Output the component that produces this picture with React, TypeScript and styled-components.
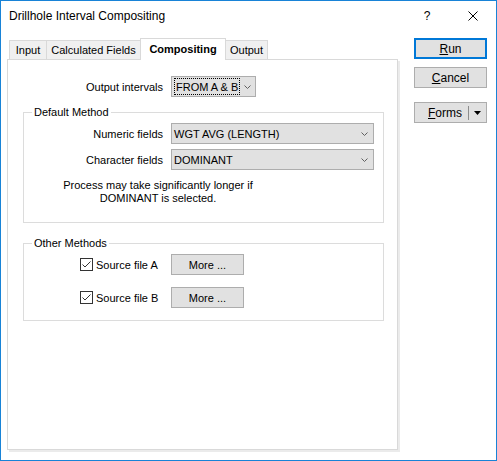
import styled, { createGlobalStyle } from 'styled-components'

const GlobalStyle = createGlobalStyle`
  html, body {
    margin: 0;
    padding: 0;
    background: #fff;
  }
  * {
    box-sizing: border-box;
  }
`

export default function App() {
  return (
    <>
      <GlobalStyle />
      <Window>
        <TitleBar>
          <Title>Drillhole Interval Compositing</Title>
          <CaptionButton>?</CaptionButton>
          <CaptionButton>
            <svg width="10" height="10" viewBox="0 0 10 10">
              <path d="M0.5 0.5 L9.5 9.5 M9.5 0.5 L0.5 9.5" stroke="#000" strokeWidth="1" fill="none" />
            </svg>
          </CaptionButton>
        </TitleBar>

        <Body>
          <TabControl>
            <TabRow>
              <Tab $w={38}>Input</Tab>
              <Tab $w={95}>Calculated Fields</Tab>
              <Tab $w={86} $active>Compositing</Tab>
              <Tab $w={43}>Output</Tab>
            </TabRow>
            <Panel>
              <FormRow>
                <FieldLabel>Output intervals</FieldLabel>
                <Combo $w={85}>
                  <FocusText>FROM A &amp; B</FocusText>
                  <Chevron />
                </Combo>
              </FormRow>

              <GroupBox $mt={9}>
                <Legend>Default Method</Legend>
                <FormRow>
                  <FieldLabel>Numeric fields</FieldLabel>
                  <Combo $w={203}>
                    <ComboText>WGT AVG (LENGTH)</ComboText>
                    <Chevron />
                  </Combo>
                </FormRow>
                <FormRow $mt={5}>
                  <FieldLabel>Character fields</FieldLabel>
                  <Combo $w={203}>
                    <ComboText>DOMINANT</ComboText>
                    <Chevron />
                  </Combo>
                </FormRow>
                <Note>
                  Process may take significantly longer if
                  <br />
                  DOMINANT is selected.
                </Note>
              </GroupBox>

              <GroupBox $mt={14} $pb={12}>
                <Legend>Other Methods</Legend>
                <CheckRow>
                  <CheckLabel>
                    <CheckBox />
                    Source file A
                  </CheckLabel>
                  <MoreButton>More ...</MoreButton>
                </CheckRow>
                <CheckRow $mt={12}>
                  <CheckLabel>
                    <CheckBox />
                    Source file B
                  </CheckLabel>
                  <MoreButton>More ...</MoreButton>
                </CheckRow>
              </GroupBox>
            </Panel>
          </TabControl>

          <ButtonColumn>
            <DialogButton $default>
              <u>R</u>un
            </DialogButton>
            <DialogButton $mt={8}>
              <u>C</u>ancel
            </DialogButton>
            <SplitButton>
              <span>
                <u>F</u>orms
              </span>
              <SplitDivider />
              <svg width="7" height="4" viewBox="0 0 7 4">
                <polygon points="0,0 7,0 3.5,4" fill="#000" />
              </svg>
            </SplitButton>
          </ButtonColumn>
        </Body>
      </Window>
    </>
  )
}

function Chevron() {
  return (
    <ChevronBox>
      <svg width="7" height="4" viewBox="0 0 7 4">
        <polyline points="0.5,0.5 3.5,3.5 6.5,0.5" stroke="#606060" strokeWidth="1" fill="none" />
      </svg>
    </ChevronBox>
  )
}

function CheckBox() {
  return (
    <svg width="13" height="13" viewBox="0 0 13 13">
      <rect x="0.5" y="0.5" width="12" height="12" fill="#fff" stroke="#333" />
      <path d="M2.5 6.5 L5 9 L10.5 3.5" stroke="#333" strokeWidth="1" fill="none" />
    </svg>
  )
}

const Window = styled.div`
  width: 497px;
  height: 461px;
  border: 1px solid #1883d7;
  background: #fff;
  font-family: "Liberation Sans", Arial, sans-serif;
  font-size: 11px;
  color: #000;
  display: flex;
  flex-direction: column;
  overflow: hidden;
`

const TitleBar = styled.div`
  height: 30px;
  flex-shrink: 0;
  display: flex;
  align-items: center;
`

const Title = styled.div`
  flex: 1;
  padding-left: 8px;
  font-size: 12px;
`

const CaptionButton = styled.div`
  width: 46px;
  height: 30px;
  display: flex;
  align-items: center;
  justify-content: center;
  font-size: 12px;
`

const Body = styled.div`
  display: flex;
  padding: 7px 0 0 6px;
`

const TabControl = styled.div`
  width: 391px;
  display: flex;
  flex-direction: column;
`

const TabRow = styled.div`
  height: 21px;
  display: flex;
  align-items: flex-end;
  padding-left: 2px;
`

const Tab = styled.div<{ $w: number; $active?: boolean }>`
  width: ${(p) => p.$w}px;
  height: ${(p) => (p.$active ? 22 : 19)}px;
  margin-bottom: ${(p) => (p.$active ? -1 : 0)}px;
  border: 1px solid #d9d9d9;
  border-bottom: none;
  background: ${(p) => (p.$active ? '#fff' : '#f0f0f0')};
  font-weight: ${(p) => (p.$active ? 'bold' : 'normal')};
  display: flex;
  align-items: center;
  justify-content: center;
  position: relative;
  z-index: ${(p) => (p.$active ? 1 : 0)};
  padding-bottom: ${(p) => (p.$active ? 2 : 0)}px;

  & + & {
    margin-left: -1px;
  }
`

const Panel = styled.div`
  height: 391px;
  border: 1px solid #d9d9d9;
  box-shadow: 2px 2px 0 #ebebeb;
  background: #fff;
  padding-top: 16px;
`

const FormRow = styled.div<{ $mt?: number }>`
  height: 21px;
  margin-top: ${(p) => p.$mt ?? 0}px;
  margin-left: 16px;
  display: flex;
  align-items: center;
  gap: 8px;

  fieldset & {
    margin-left: 0;
  }
`

const FieldLabel = styled.div`
  width: 139px;
  text-align: right;
  white-space: nowrap;
`

const Combo = styled.div<{ $w: number }>`
  width: ${(p) => p.$w}px;
  height: 21px;
  border: 1px solid #adadad;
  background: #e1e1e1;
  display: flex;
  align-items: center;
  padding-left: 2px;
`

const ComboText = styled.div`
  flex: 1;
  white-space: nowrap;
`

const FocusText = styled.div`
  height: 17px;
  border: 1px dotted #000;
  display: flex;
  align-items: center;
  padding: 0 1px;
  white-space: nowrap;
  margin-right: auto;
`

const ChevronBox = styled.div`
  width: 18px;
  height: 100%;
  display: flex;
  align-items: center;
  justify-content: center;
`

const GroupBox = styled.fieldset<{ $mt: number; $pb?: number }>`
  width: 361px;
  min-width: 0;
  margin: ${(p) => p.$mt}px 0 0 15px;
  border: 1px solid #dcdcdc;
  padding: 4px 0 ${(p) => p.$pb ?? 17}px 0;
`

const Legend = styled.legend`
  margin-left: 8px;
  padding: 0 2px;
  line-height: 13px;
`

const Note = styled.div`
  width: 268px;
  margin-top: 9px;
  line-height: 13px;
  text-align: center;
`

const CheckRow = styled.div<{ $mt?: number }>`
  height: 21px;
  margin-top: ${(p) => p.$mt ?? 0}px;
  padding-left: 56px;
  display: flex;
  align-items: center;
`

const CheckLabel = styled.label`
  width: 91px;
  display: flex;
  align-items: center;
  gap: 3px;
  white-space: nowrap;
`

const MoreButton = styled.div`
  width: 73px;
  height: 21px;
  border: 1px solid #adadad;
  background: #e1e1e1;
  display: flex;
  align-items: center;
  justify-content: center;
`

const ButtonColumn = styled.div`
  width: 73px;
  margin-left: 16px;
  display: flex;
  flex-direction: column;
`

const DialogButton = styled.div<{ $default?: boolean; $mt?: number }>`
  height: 21px;
  margin-top: ${(p) => p.$mt ?? 0}px;
  border: ${(p) => (p.$default ? '2px solid #0078d7' : '1px solid #adadad')};
  background: #e1e1e1;
  display: flex;
  align-items: center;
  justify-content: center;
  font-size: 12px;
`

const SplitButton = styled.div`
  height: 21px;
  margin-top: 14px;
  border: 1px solid #adadad;
  background: #e1e1e1;
  display: flex;
  align-items: center;
  justify-content: flex-end;
  padding-right: 5px;
  font-size: 12px;
`

const SplitDivider = styled.div`
  width: 1px;
  height: 14px;
  background: #8c8c8c;
  margin: 0 5px 0 6px;
`
